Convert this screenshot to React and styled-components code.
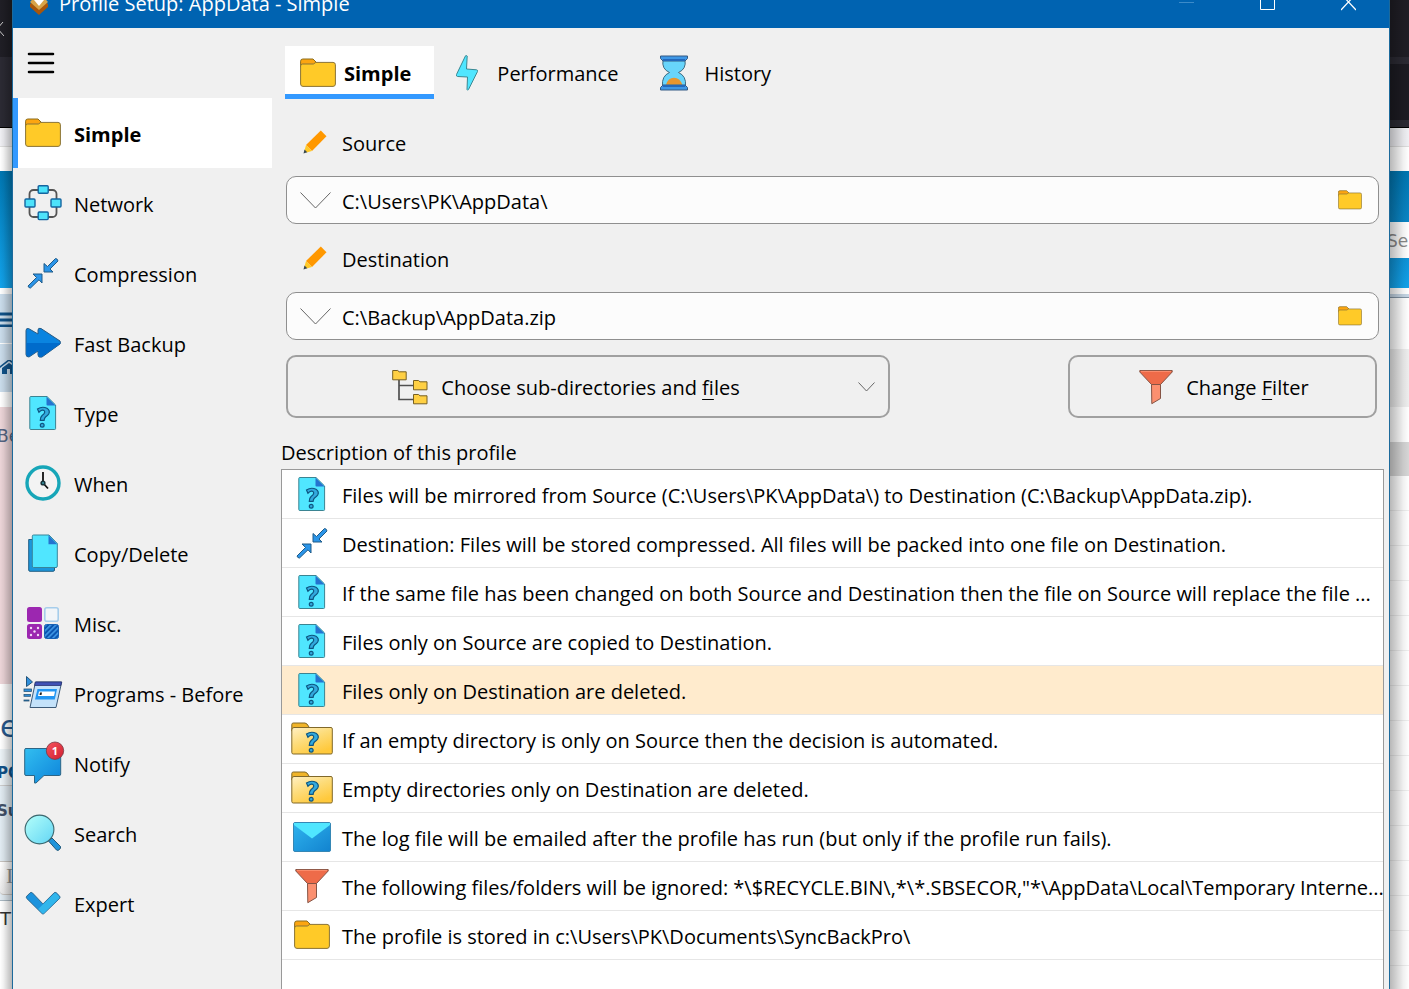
import React, { useState } from "react";
import styled, { createGlobalStyle, css } from "styled-components";

const GlobalStyle = createGlobalStyle`
    * {
        box-sizing: border-box;
    }
    body {
        margin: 0;
        overflow: hidden;
        font-family: "Open Sans", "Noto Sans", sans-serif;
        font-size: 20px;
        line-height: 28px;
        color: #000;
    }
    button, input {
        font: inherit;
        color: inherit;
    }
`;

/* ---------- icons ---------- */

const FolderIcon = ({ size = 36 }) => (
    <svg width={size} height={size} viewBox="0 0 36 36" aria-hidden="true">
        <path d="M.6 8V6.200Q.6 4 2.800 4H13l3.600 3.600V12H.6z" fill="#fca510" stroke="#8a6d1c" />
        <path d="M.6 11Q.6 9 2.600 9H13.400l2.400-1.600H33Q35.400 7.400 35.400 9.800V29Q35.400 31.400 33 31.400H3Q.6 31.400 .6 29z" fill="#ffca28" stroke="#8a7436" />
    </svg>
);

const NetworkIcon = () => (
    <svg width="38" height="38" viewBox="0 0 38 38" aria-hidden="true">
        <rect x="5.500" y="6" width="27" height="27" rx="4" fill="none" stroke="#545454" strokeWidth="1.800" />
        <g fill="#4de3fb" stroke="#1565a0" strokeWidth="1.400">
            <rect x="14.200" y="1.700" width="10" height="7.600" rx="1" />
            <rect x="14.200" y="28" width="10" height="7.600" rx="1" />
            <rect x="1" y="15" width="10" height="8" rx="1" />
            <rect x="27" y="15" width="10" height="8" rx="1" />
        </g>
    </svg>
);

const CompressIcon = () => (
    <svg width="32" height="32" viewBox="0 0 32 32" aria-hidden="true">
        <g fill="#2b95e9" stroke="#1f5b88" strokeLinejoin="round">
            <path d="M17 6.500V15H26L23 12 31 4Q30.500 1.500 28.500 1.500L20.500 9.500z" />
            <path d="M15 26V17H6L9.500 20.500 1 29Q1.500 31 3.500 31L12 22.800z" />
        </g>
    </svg>
);

const FastIcon = () => (
    <svg width="36" height="32" viewBox="0 0 36 32" aria-hidden="true">
        <path d="M1 3.500Q1 1 3.500 1.500L13 7V3Q13 .5 16 1.500L35 14Q36 16 35 17L17 30Q13 31 13 28V24L4 30Q1 30 1 27.500z" fill="#0a84e0" stroke="#285b84" />
        <path d="M1.500 16H35.200Q35.500 17 34.500 17.300L17 29.500Q13.500 30.500 13.500 28V23L4 29.500Q1.500 29.500 1.500 27z" fill="#006bcb" />
    </svg>
);

const QuestionMark = () => (
    <g>
        <path d="M8.500 14Q13 11 18 13.200 21.500 15.500 19.700 19 18.900 20.300 16.500 22 15.300 23 15.100 25.300H11.300Q11.100 22.300 13.100 20.500 15.700 18.500 15.700 17.300 15.800 15 13.300 15.200 11.800 15.400 9.900 17.200z" fill="#32a9dd" stroke="#0d5580" strokeWidth="1.200" />
        <circle cx="13.200" cy="30.300" r="1.900" fill="#32a9dd" stroke="#0d5580" strokeWidth="1.200" />
    </g>
);

const FileIcon = () => (
    <svg width="28" height="36" viewBox="0 0 28 36" aria-hidden="true">
        <path d="M1.800 1.500H18L26.600 10V33.500Q26.600 34.500 25.600 34.500H1.800Q.8 34.500 .8 33.500V2.500Q.8 1.500 1.800 1.500z" fill="#50e6ff" stroke="#3b8492" />
        <path d="M17.500 1.800L26.500 10.500H18.500Q17.500 10.500 17.500 9.500z" fill="#2473cf" />
        <QuestionMark />
    </svg>
);

const ClockIcon = () => (
    <svg width="36" height="36" viewBox="0 0 36 36" aria-hidden="true">
        <circle cx="18" cy="18" r="16" fill="#f3f3f3" stroke="#17a6b8" strokeWidth="3.400" />
        <path d="M18 7V18L23 23.500" fill="none" stroke="#111" strokeWidth="1.800" />
        <circle cx="18" cy="18" r="2.600" fill="#18333a" />
        <circle cx="18" cy="18" r="1" fill="#3b9aa9" />
    </svg>
);

const CopyIcon = () => (
    <svg width="30" height="38" viewBox="0 0 30 38" aria-hidden="true">
        <path d="M.7 5.500H6V33H26.500V36Q26.500 37.300 25 37.300H2Q.7 37.300 .7 36z" fill="#1b97dc" stroke="#235e84" />
        <path d="M5.500 1H21L29.300 9.500V32Q29.300 33.500 28 33.500H5.500Q4.300 33.500 4.300 32V2.200Q4.300 1 5.500 1z" fill="#50e6ff" stroke="#37859b" />
        <path d="M20.500 1.200L29.200 10.200H20.500z" fill="#2473cf" />
    </svg>
);

const MiscIcon = () => (
    <svg width="32" height="32" viewBox="0 0 32 32" aria-hidden="true">
        <defs>
            <pattern id="stripes" width="3.600" height="3.600" patternUnits="userSpaceOnUse" patternTransform="rotate(45)">
                <rect width="3.600" height="3.600" fill="#0c55b0" />
                <rect width="1.400" height="3.600" fill="#47a3ee" />
            </pattern>
        </defs>
        <rect x="0" y="0" width="15" height="15" rx="2.500" fill="#9c27b0" />
        <rect x="17.800" y=".8" width="13.400" height="13.400" rx="2" fill="#f2f5f8" stroke="#a6cdeb" strokeWidth="1.600" />
        <rect x="0" y="17" width="15" height="15" rx="2.500" fill="#9c27b0" />
        <rect x="17.500" y="17.500" width="14" height="14" rx="2" fill="url(#stripes)" stroke="#1762b5" />
        <g fill="#f4d9f8">
            <circle cx="4" cy="21" r="1.200" />
            <circle cx="11" cy="21" r="1.200" />
            <circle cx="7.500" cy="24.500" r="1.200" />
            <circle cx="4" cy="28" r="1.200" />
            <circle cx="11" cy="28" r="1.200" />
        </g>
    </svg>
);

const ProgramIcon = () => (
    <svg width="40" height="34" viewBox="0 0 40 34" aria-hidden="true">
        <path d="M3.500 .5L9.500 6 3.500 10.500z" fill="#2f8fdc" stroke="#245479" />
        <g fill="#2f8fdc" stroke="#245479" strokeWidth=".8">
            <rect x="1" y="13" width="7.500" height="2.400" />
            <rect x="1" y="18.500" width="6.500" height="1.800" />
            <rect x="1" y="24" width="5" height="1" />
        </g>
        <path d="M12.500 6H38.700L33 31.500H7z" fill="#c4e2fa" stroke="#3c5a78" />
        <path d="M12.400 6H38.700L37.900 9.500H11.600z" fill="#3f51b5" stroke="#2a3272" strokeWidth=".8" />
        <path d="M14.500 13H34L31.800 23.500H12z" fill="#2196f3" />
        <path d="M16 15.500H32L31 20H15z" fill="#fff" />
        <path d="M17 16.500H19L18.500 19H16.500z" fill="#222" />
    </svg>
);

const NotifyIcon = () => (
    <svg width="38" height="42" viewBox="0 0 38 42" overflow="visible" aria-hidden="true">
        <defs>
            <linearGradient id="bubble" x1="0" y1="0" x2="1" y2="1">
                <stop offset="0" stopColor="#32bef0" />
                <stop offset="1" stopColor="#0d83da" />
            </linearGradient>
            <linearGradient id="alert" x1="0" y1="0" x2="1" y2="1">
                <stop offset="0" stopColor="#f6545d" />
                <stop offset="1" stopColor="#d01f30" />
            </linearGradient>
        </defs>
        <path d="M2 6.500H35.500Q36.700 6.500 36.700 7.500V32Q36.700 33.500 35.500 33.500H20L12 41H10.500V33.500H2Q.7 33.500 .7 32V7.500Q.7 6.500 2 6.500z" fill="url(#bubble)" stroke="#2d6585" />
        <circle cx="31" cy="8.700" r="8.700" fill="url(#alert)" stroke="#793742" strokeWidth=".8" />
        <text x="31" y="12.700" textAnchor="middle" fontSize="11" fontWeight="700" fill="#fff">1</text>
    </svg>
);

const SearchIcon = () => (
    <svg width="38" height="38" viewBox="0 0 38 38" aria-hidden="true">
        <defs>
            <linearGradient id="lens" x1="0" y1="0" x2="1" y2="1">
                <stop offset="0" stopColor="#b4fffa" />
                <stop offset="1" stopColor="#62d5f4" />
            </linearGradient>
        </defs>
        <path d="M24.500 27L28 24 36.500 32.500Q37 34 35.500 35.500 34 37 32.500 36z" fill="#2094da" stroke="#235a7c" />
        <circle cx="15.500" cy="15.500" r="14.400" fill="url(#lens)" stroke="#3b666d" strokeWidth="1.100" />
    </svg>
);

const ExpertIcon = () => (
    <svg width="38" height="24" viewBox="0 0 38 26" aria-hidden="true">
        <path d="M1.300 8Q.3 6.500 1.500 5.500L5 2Q6 1 7.500 2L19 14 31 2Q32 1 33.500 2L37 5.500Q38 6.800 37 8L20 24.500Q19 25.500 18 24.500z" fill="#1c93dd" stroke="#2b658a" />
        <path d="M13.800 19.500L31.300 2.500Q32 1.800 33 2.500L36.500 6Q37 7 36.500 7.800L20 24Q19 25 18.200 24z" fill="#31b6ec" />
    </svg>
);

const BoltIcon = () => (
    <svg width="36" height="36" viewBox="0 0 36 36" aria-hidden="true">
        <path d="M16.500 .8L7.500 19.500Q7 21.300 8.500 21.500L18.500 22 18 34.500Q18.500 35.800 19.500 34.500L28.500 16.500Q29 15 27.500 14.800L17.500 14 18.200 1Q17.500 0 16.500 .8z" fill="#50e6ff" stroke="#3a8791" />
    </svg>
);

const HourglassIcon = () => (
    <svg width="36" height="36" viewBox="0 0 36 36" aria-hidden="true">
        <path d="M7 5H29Q30.500 14 22.500 17.500 30.500 21 29.500 31H6.500Q5.500 21 13.500 17.500 5.500 14 7 5z" fill="#68d5fb" stroke="#3d6a80" />
        <path d="M10 29.800Q12 23 18 22.800 24 23 26.300 29.800z" fill="#e8962e" />
        <path d="M4.500 1H31.500V3.500L29 6H7L4.500 3.500zM4.500 35H31.500V32.500L29 30H7L4.500 32.500z" fill="#3e97e6" stroke="#345a83" />
        <path d="M7 4H29V6H7zM7 30H29V32H7z" fill="#2469bb" />
    </svg>
);

const PencilIcon = () => (
    <svg width="24" height="24" viewBox="0 0 24 24" aria-hidden="true">
        <path d="M17.800 .5L23.500 6.300 9 21 3 15z" fill="#ff9800" />
        <path d="M3 15L9 21 3.500 22.600 1.500 20.500z" fill="#ffca28" />
        <path d="M1.500 19.500L4.300 22.300 .5 23.500z" fill="#37474f" />
    </svg>
);

const TreeIcon = () => (
    <svg width="36" height="36" viewBox="0 0 36 36" aria-hidden="true">
        <path d="M7 11V30.500H22M7 16.500H22" fill="none" stroke="#505050" strokeWidth="1.700" />
        {[[.7, 1.5], [21.5, 11.5], [21.5, 25.5]].map(([x, y]) => (
            <path key={y} d={`M${x} ${y}h5l1.500 1.300h7v8h-13.500z`} fill="#ffd043" stroke="#776022" strokeLinejoin="round" />
        ))}
    </svg>
);

const FunnelIcon = () => (
    <svg width="34" height="36" viewBox="0 0 34 36" aria-hidden="true">
        <path d="M12.500 15.500H21.500V29.500L12.800 34.700z" fill="#fb9070" stroke="#855445" />
        <path d="M.8 1.500H33.200V3L21.500 15.500H12.500L.8 3z" fill="#ee6b49" stroke="#855445" />
        <path d="M2 2.400H32" stroke="#fb9070" />
    </svg>
);

const FolderQuestionIcon = () => (
    <svg width="42" height="36" viewBox="0 0 42 36" aria-hidden="true">
        <defs>
            <linearGradient id="pale" x1="0" y1="0" x2=".6" y2="1">
                <stop offset="0" stopColor="#fff0c4" />
                <stop offset=".5" stopColor="#fddc7a" />
                <stop offset="1" stopColor="#ffc93c" />
            </linearGradient>
        </defs>
        <path d="M.8 10V3.500Q.8 2 2.300 2H14Q16 2 18 6V10z" fill="#f0b429" stroke="#80682a" />
        <path d="M.8 9Q.8 6.500 3 6.500H40Q41.300 6.500 41.300 8V31.500Q41.300 33 40 33H2.300Q.8 33 .8 31.500z" fill="url(#pale)" stroke="#80682a" />
        <g transform="translate(7 -1)">
            <QuestionMark />
        </g>
    </svg>
);

const MailIcon = () => (
    <svg width="38" height="30" viewBox="0 0 38 30" aria-hidden="true">
        <defs>
            <linearGradient id="mail" x1="0" y1="0" x2="1" y2="1">
                <stop offset="0" stopColor="#2fb3ee" />
                <stop offset="1" stopColor="#1283cf" />
            </linearGradient>
        </defs>
        <rect x=".5" y=".5" width="37" height="29" rx="1.500" fill="url(#mail)" stroke="#3587b5" />
        <path d="M1 1H37V3L19 16.500 1 3z" fill="#50e6ff" />
    </svg>
);

const Chevron = ({ w, h }) => (
    <svg width={w} height={h} viewBox={`0 0 ${w} ${h}`} fill="none" stroke="#666" aria-hidden="true">
        <path d={`M.5 .5L${w / 2} ${h - 1}L${w - .5} .5`} />
    </svg>
);

/* ---------- data ---------- */

const menu = [
    { label: "Simple", Icon: FolderIcon },
    { label: "Network", Icon: NetworkIcon },
    { label: "Compression", Icon: CompressIcon },
    { label: "Fast Backup", Icon: FastIcon },
    { label: "Type", Icon: FileIcon },
    { label: "When", Icon: ClockIcon },
    { label: "Copy/Delete", Icon: CopyIcon },
    { label: "Misc.", Icon: MiscIcon },
    { label: "Programs - Before", Icon: ProgramIcon },
    { label: "Notify", Icon: NotifyIcon },
    { label: "Search", Icon: SearchIcon },
    { label: "Expert", Icon: ExpertIcon },
];

const tabs = [
    { label: "Simple", Icon: FolderIcon },
    { label: "Performance", Icon: BoltIcon },
    { label: "History", Icon: HourglassIcon },
];

const description = [
    { Icon: FileIcon, text: "Files will be mirrored from Source (C:\\Users\\PK\\AppData\\) to Destination (C:\\Backup\\AppData.zip)." },
    { Icon: CompressIcon, text: "Destination: Files will be stored compressed. All files will be packed into one file on Destination." },
    { Icon: FileIcon, text: "If the same file has been changed on both Source and Destination then the file on Source will replace the file ..." },
    { Icon: FileIcon, text: "Files only on Source are copied to Destination." },
    { Icon: FileIcon, text: "Files only on Destination are deleted.", warning: true },
    { Icon: FolderQuestionIcon, text: "If an empty directory is only on Source then the decision is automated." },
    { Icon: FolderQuestionIcon, text: "Empty directories only on Destination are deleted." },
    { Icon: MailIcon, text: "The log file will be emailed after the profile has run (but only if the profile run fails)." },
    { Icon: FunnelIcon, text: "The following files/folders will be ignored: *\\$RECYCLE.BIN\\,*\\*.SBSECOR,\"*\\AppData\\Local\\Temporary Interne..." },
    { Icon: FolderIcon, text: "The profile is stored in c:\\Users\\PK\\Documents\\SyncBackPro\\" },
];

export default function App() {
    const [section, setSection] = useState("Simple");
    const [tab, setTab] = useState("Simple");
    const [source, setSource] = useState("C:\\Users\\PK\\AppData\\");
    const [destination, setDestination] = useState("C:\\Backup\\AppData.zip");

    return (
        <Desktop>
            <GlobalStyle />
            <Behind $side="right">
                <Band $h={57} $bg="#1f1e25">
                    <svg width="4" height="14" viewBox="0 0 4 14" stroke="#ccc" fill="none"><path d="M-3 7L3 0M-3 6L4 14" /></svg>
                </Band>
                <Band $h={71} $bg="#2b2a33" $line="#000" />
                <Band $h={19} $bg="#f0f0f4" $line="#ddd" />
                <Band $h={24} $bg="#fff" />
                <Band $h={117} $bg="linear-gradient(#0076b1, #12a3eb)" />
                <Band $h={6} $bg="#fff" />
                <Band $h={50} $bg="#cadceb" $line="#fff">
                    <svg width="12" height="16" viewBox="0 0 12 16" stroke="#105289" strokeWidth="3"><path d="M0 3H12M0 9H12M0 15H12" /></svg>
                </Band>
                <Band $h={48} $bg="#cadceb">
                    <svg width="12" height="16" viewBox="0 0 12 16" fill="#105289"><path d="M0 6L9 -1 12 1V3L9 1 0 8zM2 8L9 3 12 5V14H10V9H7V14H2z" /></svg>
                </Band>
                <Band $h={15} $bg="#fff" />
                <Band $h={277} $bg="#ecd5d8">
                    <Word $size={17} $top={15} $color="#536482">Be</Word>
                </Band>
                <Band $h={65} $bg="#fff">
                    <Word $size={30} $top={29} $color="#28588c" $inset>e</Word>
                </Band>
                <Band $h={37} $bg="#ecf3f7" $line="#ccc">
                    <Word $size={15} $top={10} $color="#105289" $bold>PO</Word>
                </Band>
                <Band $h={75} $bg="#e1ebf2">
                    <Word $size={15} $top={11} $color="#425067" $bold>Su</Word>
                </Band>
                <Band $h={40} $bg="#e1ebf2" $line="#a9b8c2">
                    <Key>I</Key>
                </Band>
                <Band $h={88} $bg="#fff">
                    <Word $size={18} $top={4} $color="#333" $inset>T</Word>
                </Band>
            </Behind>

            <Window>
                <TitleBar>
                    <svg width="20" height="28" viewBox="0 0 20 28" aria-hidden="true">
                        <path d="M1 14L10 7 19 14V17L10 25 1 17z" fill="#a8560b" />
                        <path d="M1 12L10 2 19 12 10 20z" fill="#d7a449" />
                        <path d="M5 10L10 4 15 10 10 16z" fill="#fff" />
                    </svg>
                    <Title>Profile Setup: AppData - Simple</Title>
                    <Captions>
                        <CaptionButton aria-label="Minimize">
                            <svg width="15" height="15" viewBox="0 0 15 15" stroke="#3c8bc9"><path d="M0 5.500H15" /></svg>
                        </CaptionButton>
                        <CaptionButton aria-label="Maximize">
                            <svg width="15" height="15" viewBox="0 0 15 15" fill="none" stroke="#fff"><path d="M.5 .5H14.500V12.500H.5z" /></svg>
                        </CaptionButton>
                        <CaptionButton aria-label="Close">
                            <svg width="15" height="15" viewBox="0 0 15 15" stroke="#fff" strokeWidth="1.200"><path d="M1 -2L15 13M14 -2L0 13" /></svg>
                        </CaptionButton>
                    </Captions>
                </TitleBar>

                <Body>
                    <Sidebar>
                        <MenuButton aria-label="Menu">
                            <svg width="28" height="22" viewBox="0 0 28 22" stroke="#000" strokeWidth="2.600" strokeLinecap="round">
                                <path d="M2 2H26M2 11H26M2 20H26" />
                            </svg>
                        </MenuButton>
                        {menu.map(({ label, Icon }) => (
                            <MenuItem key={label} $active={label === section} onClick={() => setSection(label)}>
                                <IconBox $w={40}><Icon /></IconBox>
                                <Label>{label}</Label>
                            </MenuItem>
                        ))}
                    </Sidebar>

                    <Main>
                        <Tabs>
                            {tabs.map(({ label, Icon }) => (
                                <Tab key={label} $active={label === tab} onClick={() => setTab(label)}>
                                    <Icon />
                                    <Label>{label}</Label>
                                </Tab>
                            ))}
                        </Tabs>

                        <Fields>
                            <FieldLabel htmlFor="source">
                                <PencilIcon />
                                <Label>Source</Label>
                            </FieldLabel>
                            <PathBox>
                                <PlainButton aria-label="Recent sources"><Chevron w={31} h={17} /></PlainButton>
                                <PathInput id="source" value={source} onChange={(e) => setSource(e.target.value)} />
                                <PlainButton aria-label="Browse source"><FolderIcon size={24} /></PlainButton>
                            </PathBox>
                            <FieldLabel htmlFor="destination">
                                <PencilIcon />
                                <Label>Destination</Label>
                            </FieldLabel>
                            <PathBox>
                                <PlainButton aria-label="Recent destinations"><Chevron w={31} h={17} /></PlainButton>
                                <PathInput id="destination" value={destination} onChange={(e) => setDestination(e.target.value)} />
                                <PlainButton aria-label="Browse destination"><FolderIcon size={24} /></PlainButton>
                            </PathBox>
                            <Actions>
                                <ActionButton>
                                    <ActionContent $menu>
                                        <TreeIcon />
                                        <Label>Choose sub-directories and <u>f</u>iles</Label>
                                    </ActionContent>
                                    <Chevron w={17} h={10} />
                                </ActionButton>
                                <ActionButton>
                                    <ActionContent>
                                        <FunnelIcon />
                                        <Label>Change <u>F</u>ilter</Label>
                                    </ActionContent>
                                </ActionButton>
                            </Actions>
                        </Fields>

                        <ListTitle id="description">Description of this profile</ListTitle>
                        <List aria-labelledby="description">
                            {description.map(({ Icon, text, warning }) => (
                                <Row key={text} $warning={warning}>
                                    <IconBox $w={42}><Icon /></IconBox>
                                    <Label>{text}</Label>
                                </Row>
                            ))}
                        </List>
                    </Main>
                </Body>
            </Window>

            <Behind $side="left">
                <Band $h={57} $bg="#1f1e25" />
                <Band $h={7} $bg="#2b2a33" />
                <Band $h={56} $bg="#1c1b22" />
                <Band $h={8} $bg="#2b2a33" $line="#000" />
                <Band $h={19} $bg="#f0f0f4" $line="#ddd" />
                <Band $h={24} $bg="#fff" />
                <Band $h={51} $bg="linear-gradient(#0076b1, #0a86c6)" />
                <Band $h={36} $bg="#fff">
                    <Word $size={17} $top={5} $color="#8a8a8a">Se</Word>
                </Band>
                <Band $h={30} $bg="linear-gradient(#0e93d8, #12a3eb)" />
                <Band $h={6} $bg="#fff" />
                <Band $h={4} $bg="#c5d5e4" $line="#8294a5" />
                <Band $h={51} $bg="#fff" />
                <Band $h={58} $bg="#eee" />
                <Band $h={35} $bg="#fff" />
                <Band $h={34} $bg="#d6d6d6" />
                <Ruled />
            </Behind>
        </Desktop>
    );
}

/* ---------- layout ---------- */

const Desktop = styled.div`
    display: grid;
    grid-template-columns: 12px minmax(0, 1fr) 19px;
    height: 100vh;
    overflow: hidden;
`;

/* what shows of the browser behind the window, darkened by the window's shadow */
const Behind = styled.div`
    display: flex;
    flex-direction: column;
    position: relative;
    overflow: hidden;
    background: #fff;
    font-family: "DejaVu Sans", sans-serif;

    &::after {
        content: "";
        position: absolute;
        inset: 0;
        background: linear-gradient(to ${({ $side }) => $side}, transparent, rgba(0, 0, 0, 0.06) 30%, rgba(0, 0, 0, 0.28));
    }
`;

const Band = styled.div`
    flex: none;
    height: ${({ $h }) => $h}px;
    background: ${({ $bg }) => $bg};
    border-bottom: ${({ $line }) => ($line ? `1px solid ${$line}` : "none")};
    display: flex;
    align-items: center;
    overflow: hidden;
`;

const Word = styled.span`
    align-self: flex-start;
    margin-left: ${({ $inset }) => ($inset ? 0 : -3)}px;
    padding-top: ${({ $top }) => $top}px;
    font-size: ${({ $size }) => $size}px;
    font-weight: ${({ $bold }) => ($bold ? 700 : 400)};
    color: ${({ $color }) => $color};
    white-space: nowrap;
`;

const Key = styled.span`
    flex: 1;
    align-self: flex-start;
    height: 34px;
    padding-left: 6px;
    border: solid #c7c3bf;
    border-width: 1px 0;
    border-radius: 0 0 0 4px;
    background: linear-gradient(#fff, #e9e9e9);
    font-family: "Liberation Serif", serif;
    font-size: 22px;
    color: #8f8f8f;
`;

const Ruled = styled.div`
    flex: 1;
    background: repeating-linear-gradient(#fff 0 34px, #eee 34px 35px);
`;

const Window = styled.div`
    display: flex;
    flex-direction: column;
    min-height: 0;
    border: solid #1c6a9c;
    border-width: 0 1px;
    background: #f0f0f0;
`;

/* the window is dragged partly above the screen edge */
const TitleBar = styled.header`
    flex: none;
    display: flex;
    align-items: center;
    gap: 10px;
    height: 48px;
    margin-top: -20px;
    padding-left: 16px;
    background: #0063b1;
    color: #fff;
`;

const Title = styled.div`
    flex: 1;
    font-size: 20px;
`;

const Captions = styled.div`
    display: flex;
`;

const CaptionButton = styled.button`
    display: grid;
    place-items: center;
    width: 81px;
    height: 44px;
    padding: 0;
    border: none;
    background: none;
`;

const Body = styled.div`
    flex: 1;
    display: flex;
    min-height: 0;
`;

const Sidebar = styled.nav`
    flex: none;
    width: 259px;
`;

const MenuButton = styled.button`
    display: flex;
    align-items: center;
    height: 70px;
    padding: 0 14px;
    border: none;
    background: none;
    cursor: pointer;
`;

const MenuItem = styled.button`
    display: flex;
    align-items: center;
    gap: 11px;
    width: 100%;
    height: 70px;
    padding: 0 0 0 5px;
    border: none;
    border-left: 5px solid transparent;
    background: none;
    text-align: left;
    cursor: pointer;

    ${({ $active }) => $active && css`
        border-left-color: #3399ff;
        background: #fff;
        font-weight: 700;
    `}
`;

const IconBox = styled.span`
    flex: none;
    display: grid;
    place-items: center;
    width: ${({ $w }) => $w}px;
`;

/* text sits slightly below the middle of its icon */
const Label = styled.span`
    padding-top: 3px;
    white-space: nowrap;
`;

const Main = styled.main`
    flex: 1;
    display: flex;
    flex-direction: column;
    min-width: 0;
    padding: 18px 5px 0 9px;
`;

const Tabs = styled.div`
    flex: none;
    display: flex;
    padding-left: 4px;
`;

const Tab = styled.button`
    display: flex;
    align-items: center;
    gap: ${({ $active }) => ($active ? 8 : 12)}px;
    height: 53px;
    padding: 5px 23px 0 15px;
    border: none;
    border-bottom: 5px solid transparent;
    background: none;
    cursor: pointer;

    ${({ $active }) => $active && css`
        border-bottom-color: #3399ff;
        background: #fff;
        font-weight: 700;
    `}
`;

const Fields = styled.div`
    flex: none;
    display: flex;
    flex-direction: column;
    padding: 9px 5px 0 5px;
`;

const FieldLabel = styled.label`
    display: flex;
    align-items: center;
    gap: 15px;
    height: 68px;
    padding-left: 17px;
`;

const PathBox = styled.div`
    display: flex;
    align-items: center;
    height: 48px;
    padding: 0 16px 0 13px;
    border: 1px solid #8f8f8f;
    border-radius: 10px;
    background: #fcfcfc;
`;

const PlainButton = styled.button`
    display: flex;
    padding: 0;
    border: none;
    background: none;
    cursor: pointer;
`;

const PathInput = styled.input`
    flex: 1;
    min-width: 0;
    height: 34px;
    padding: 2px 11px 0;
    border: none;
    outline: none;
    background: none;
`;

const Actions = styled.div`
    display: grid;
    grid-template-columns: 604fr 309fr;
    gap: 178px;
    padding: 15px 2px 0 0;
`;

const ActionButton = styled.button`
    display: flex;
    align-items: center;
    height: 63px;
    padding: 0 13px 0 16px;
    border: 2px solid #a0a0a0;
    border-radius: 10px;
    background: none;
    cursor: pointer;

    u {
        text-decoration-thickness: 1px;
        text-underline-offset: 4px;
    }
`;

const ActionContent = styled.span`
    flex: 1;
    display: flex;
    align-items: center;
    justify-content: center;
    gap: 13px;
    padding-right: ${({ $menu }) => ($menu ? 30 : 0)}px;
`;

const ListTitle = styled.h2`
    flex: none;
    margin: 21px 0 2px;
    font-size: 20px;
    font-weight: 400;
`;

const List = styled.ul`
    flex: 1;
    min-height: 0;
    margin: 0;
    padding: 0;
    overflow: hidden;
    list-style: none;
    border: 1px solid #999;
    border-bottom: none;
    background: #fff;
`;

const Row = styled.li`
    display: flex;
    align-items: center;
    gap: 9px;
    height: 49px;
    padding-left: 9px;
    border-bottom: 1px solid #e6e6e6;
    background: ${({ $warning }) => ($warning ? "#ffebcd" : "#fff")};
`;
